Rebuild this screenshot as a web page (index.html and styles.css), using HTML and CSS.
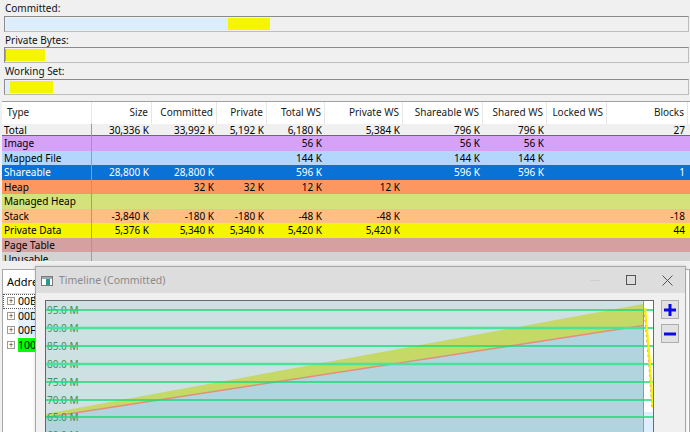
FILE: index.html
```html
<!DOCTYPE html>
<html lang="en">

<head>
    <link rel="stylesheet" href="styles.css">
    <title>VMMap</title>
</head>

<body>
    <div class="gauges">
        <div class="gauge">
            <p class="label">Committed:</p>
            <div class="bar">
                <span class="fill light" style="width: 222px"></span>
                <span class="fill yellow" style="width: 42px"></span>
            </div>
        </div>
        <div class="gauge">
            <p class="label">Private Bytes:</p>
            <div class="bar flush">
                <span class="fill yellow edge" style="width: 40px"></span>
            </div>
        </div>
        <div class="gauge">
            <p class="label">Working Set:</p>
            <div class="bar">
                <span class="fill light" style="width: 4px"></span>
                <span class="fill yellow" style="width: 43px"></span>
            </div>
        </div>
    </div>

    <div class="table">
        <div class="row head">
            <div>Type</div>
            <div>Size</div>
            <div>Committed</div>
            <div>Private</div>
            <div>Total WS</div>
            <div>Private WS</div>
            <div>Shareable WS</div>
            <div>Shared WS</div>
            <div>Locked WS</div>
            <div>Blocks</div>
        </div>
        <div class="row total">
            <div>Total</div>
            <div>30,336 K</div>
            <div>33,992 K</div>
            <div>5,192 K</div>
            <div>6,180 K</div>
            <div>5,384 K</div>
            <div>796 K</div>
            <div>796 K</div>
            <div></div>
            <div>27</div>
        </div>
        <div class="row image">
            <div>Image</div>
            <div></div>
            <div></div>
            <div></div>
            <div>56 K</div>
            <div></div>
            <div>56 K</div>
            <div>56 K</div>
            <div></div>
            <div></div>
        </div>
        <div class="row mapped">
            <div>Mapped File</div>
            <div></div>
            <div></div>
            <div></div>
            <div>144 K</div>
            <div></div>
            <div>144 K</div>
            <div>144 K</div>
            <div></div>
            <div></div>
        </div>
        <div class="row shareable">
            <div>Shareable</div>
            <div>28,800 K</div>
            <div>28,800 K</div>
            <div></div>
            <div>596 K</div>
            <div></div>
            <div>596 K</div>
            <div>596 K</div>
            <div></div>
            <div>1</div>
        </div>
        <div class="row heap">
            <div>Heap</div>
            <div></div>
            <div>32 K</div>
            <div>32 K</div>
            <div>12 K</div>
            <div>12 K</div>
            <div></div>
            <div></div>
            <div></div>
            <div></div>
        </div>
        <div class="row managed">
            <div>Managed Heap</div>
            <div></div>
            <div></div>
            <div></div>
            <div></div>
            <div></div>
            <div></div>
            <div></div>
            <div></div>
            <div></div>
        </div>
        <div class="row stack">
            <div>Stack</div>
            <div>-3,840 K</div>
            <div>-180 K</div>
            <div>-180 K</div>
            <div>-48 K</div>
            <div>-48 K</div>
            <div></div>
            <div></div>
            <div></div>
            <div>-18</div>
        </div>
        <div class="row private">
            <div>Private Data</div>
            <div>5,376 K</div>
            <div>5,340 K</div>
            <div>5,340 K</div>
            <div>5,420 K</div>
            <div>5,420 K</div>
            <div></div>
            <div></div>
            <div></div>
            <div>44</div>
        </div>
        <div class="row pagetable">
            <div>Page Table</div>
            <div></div>
            <div></div>
            <div></div>
            <div></div>
            <div></div>
            <div></div>
            <div></div>
            <div></div>
            <div></div>
        </div>
        <div class="row unusable">
            <div>Unusable</div>
            <div></div>
            <div></div>
            <div></div>
            <div></div>
            <div></div>
            <div></div>
            <div></div>
            <div></div>
            <div></div>
        </div>
    </div>

    <div class="lower">
        <div class="tree">
            <div class="tree-head">Address</div>
            <div class="node focus"><span class="exp">+</span><span class="addr">00BA0000</span></div>
            <div class="node"><span class="exp">+</span><span class="addr soft">00D00000</span></div>
            <div class="node"><span class="exp">+</span><span class="addr soft">00F30000</span></div>
            <div class="node"><span class="exp">+</span><span class="addr green">10000000</span></div>
        </div>

        <!-- floating timeline window -->
        <div class="timeline">
            <div class="titlebar">
                <svg class="app-icon" width="12" height="10" viewBox="0 0 12 10">
                    <rect x="0.5" y="0.5" width="11" height="9" fill="#fff" stroke="#7a7a7a" />
                    <rect x="1" y="1" width="10" height="2" fill="#9ab" />
                    <rect x="5" y="3" width="4" height="6" fill="#2a9a8a" />
                </svg>
                <span class="title">Timeline (Committed)</span>
                <div class="controls">
                    <span class="ctl">
                        <svg width="10" height="10" viewBox="0 0 10 10"><path d="M0 5.5h10" stroke="#cfcfcf" /></svg>
                    </span>
                    <span class="ctl">
                        <svg width="10" height="10" viewBox="0 0 10 10"><rect x="0.5" y="0.5" width="9" height="9" fill="none" stroke="#555" /></svg>
                    </span>
                    <span class="ctl">
                        <svg width="11" height="11" viewBox="0 0 11 11"><path d="M0.5 0.5l10 10M10.5 0.5l-10 10" stroke="#555" /></svg>
                    </span>
                </div>
            </div>
            <div class="tl-body">
                <div class="chart">
                    <svg width="609" height="140" viewBox="0 0 609 140">
                        <rect x="0" y="0" width="609" height="140" fill="#cde0e2" />
                        <polygon points="0,117 598,25 598,140 0,140" fill="#b1d4df" />
                        <polygon points="0,114 598,4 598,25 0,117" fill="#c6d866" />
                        <line x1="0" y1="117.5" x2="598" y2="25.5" stroke="#e08f78" stroke-width="1.5" />
                        <g class="axis">
                            <text x="2" y="14">95.0 M</text>
                            <text x="2" y="32">90.0 M</text>
                            <text x="2" y="50">85.0 M</text>
                            <text x="2" y="68">80.0 M</text>
                            <text x="2" y="86">75.0 M</text>
                            <text x="2" y="104">70.0 M</text>
                            <text x="2" y="121">65.0 M</text>
                            <text x="2" y="139">60.0 M</text>
                        </g>
                        <g stroke="#18dc78" stroke-width="1.5">
                            <line x1="0" y1="10" x2="609" y2="10" />
                            <line x1="0" y1="28" x2="609" y2="28" stroke="#4ae39a" stroke-width="2.5" />
                            <line x1="0" y1="46" x2="609" y2="46" />
                            <line x1="0" y1="64" x2="609" y2="64" stroke="#4ae39a" stroke-width="2.5" />
                            <line x1="0" y1="82" x2="609" y2="82" />
                            <line x1="0" y1="100" x2="609" y2="100" />
                            <line x1="0" y1="117" x2="609" y2="117" />
                            <line x1="0" y1="135" x2="609" y2="135" />
                        </g>
                        <rect x="599" y="1" width="9" height="139" fill="#ffffff" />
                        <rect x="599" y="112" width="9" height="28" fill="#ddeeff" />
                        <g stroke="#18dc78" stroke-width="1.5">
                            <line x1="599" y1="10" x2="609" y2="10" />
                            <line x1="599" y1="28" x2="609" y2="28" />
                            <line x1="599" y1="46" x2="609" y2="46" />
                            <line x1="599" y1="64" x2="609" y2="64" />
                            <line x1="599" y1="82" x2="609" y2="82" />
                            <line x1="599" y1="100" x2="609" y2="100" />
                            <line x1="599" y1="117" x2="609" y2="117" />
                        </g>
                        <line x1="598.5" y1="0" x2="598.5" y2="140" stroke="#30e040" />
                        <polyline points="600,8 601,20 603,42 605,66 606,80 607,96 608,108" fill="none" stroke="#f4f400" stroke-width="2.5" />
                        <polyline points="599,10 600,22 602,44 604,68 605,82 606,98 607,110" fill="none" stroke="#ef9a9a" stroke-width="1" stroke-dasharray="2 3" />
                        <line x1="0" y1="0.5" x2="609" y2="0.5" stroke="#6a6a6a" />
                        <line x1="0.5" y1="0" x2="0.5" y2="140" stroke="#a0503e" />
                        <line x1="608.5" y1="0" x2="608.5" y2="140" stroke="#6a6a6a" />
                    </svg>
                </div>
                <div class="zoom">
                    <button class="zbtn">
                        <svg width="12" height="12" viewBox="0 0 12 12"><path d="M0 6h12M6 0v12" stroke="#0a0ae6" stroke-width="3" /></svg>
                    </button>
                    <button class="zbtn">
                        <svg width="12" height="12" viewBox="0 0 12 12"><path d="M0 6h12" stroke="#0a0ae6" stroke-width="3" /></svg>
                    </button>
                </div>
            </div>
        </div>
    </div>
</body>

</html>
```

FILE: styles.css
```css
* {
    margin: 0;
    padding: 0;
    box-sizing: border-box;
    font-family: "Noto Sans", "DejaVu Sans", sans-serif;
}

body {
    background-color: #f0f0f0;
    width: 690px;
    height: 432px;
    overflow: hidden;
    font-size: 10px;
    color: #000;
}

/* gauges on top */

.gauges {
    height: 101px;
    padding: 0 1px 0 4px;
}

.label {
    height: 15.5px;
    line-height: 16px;
    padding-left: 1px;
    color: #111;
}

.bar {
    height: 16px;
    display: flex;
    padding: 1px 1px;
    border: 1px solid #8a8a8a;
    border-bottom-color: #bdbdbd;
    border-right-color: #bdbdbd;
    background-color: #f0f0f0;
}

.bar.flush {
    padding-left: 0;
}

.fill {
    height: 100%;
}

.fill.light {
    background-color: #dcedfd;
}

.fill.yellow {
    background-color: #f5f500;
}

.fill.edge {
    border-left: 1px solid #b8b800;
}

/* summary table */

.table {
    margin-left: 2px;
    width: 688px;
    height: 160px;
    overflow: hidden;
    border-top: 1px solid #a0a0a0;
    background-color: #fff;
}

.row {
    display: grid;
    grid-template-columns: 90px 60px 65px 50px 58px 78px 80px 64px 60px 81px;
    height: 14.5px;
    line-height: 14.5px;
}

.row div {
    text-align: right;
    padding-right: 3px;
    white-space: nowrap;
    overflow: hidden;
}

.row div:first-child {
    text-align: left;
    padding-left: 2px;
    border-right: 1px solid #9c9c9c;
}

.row.head {
    height: 22px;
    line-height: 21px;
    background-color: #fff;
    color: #1a1a1a;
}

.row.head div {
    border-right: 1px solid #e6e6e6;
}

.row.head div:first-child {
    padding-left: 5px;
    border-right: 1px solid #e6e6e6;
}

.row.total {
    height: 12px;
    line-height: 12px;
    background-color: #f0f0f0;
    border-bottom: 1px solid #6a6a6a;
}

.row.total div {
    overflow: visible;
}

.image {
    background-color: #d6a2f8;
}

.mapped {
    background-color: #b2d6fc;
}

.shareable {
    background-color: #0a72d6;
    color: #fff;
}

.heap {
    background-color: #fd9762;
}

.managed {
    background-color: #d5e27b;
}

.stack {
    background-color: #ffbe82;
}

.private {
    background-color: #f5f500;
}

.pagetable {
    background-color: #d4a0a0;
}

.unusable {
    background-color: #d3d3d3;
}

/* lower pane */

.lower {
    position: relative;
    height: 171px;
    padding-top: 8px;
}

.tree {
    margin-left: 2px;
    width: 688px;
    height: 170px;
    background-color: #fff;
    border: 1px solid #a8a8a8;
}

.tree-head {
    width: 32px;
    overflow: hidden;
    white-space: nowrap;
    height: 24px;
    line-height: 24px;
    padding-left: 4px;
    font-size: 11px;
    border-bottom: 1px solid #e3e3e3;
}

.node {
    display: flex;
    align-items: center;
    width: 32px;
    overflow: hidden;
    white-space: nowrap;
    height: 14.5px;
    padding-left: 4px;
    font-size: 10.5px;
}

.node.focus {
    outline: 1px dotted #555;
    outline-offset: -1px;
}

.exp {
    flex: none;
    width: 8px;
    height: 8px;
    border: 1px solid #9a9a9a;
    font-size: 8px;
    line-height: 6px;
    text-align: center;
    color: #333;
    margin-right: 3px;
}

.addr {
    flex: none;
}

.soft {
    background-color: #e3f0fc;
}

.green {
    background-color: #00ff00;
}

/* timeline window */

.timeline {
    position: absolute;
    left: 35px;
    top: 5px;
    width: 651px;
    height: 180px;
    background-color: #f0f0f0;
    border: 1px solid #a8a8a8;
    box-shadow: 0 0 3px rgba(0, 0, 0, 0.15);
}

.titlebar {
    height: 26px;
    display: flex;
    align-items: center;
    padding-left: 5px;
    background-color: #dddddd;
}

.app-icon {
    margin-top: 1px;
}

.title {
    margin-left: 6px;
    color: #8a8a8a;
    font-size: 10.5px;
}

.controls {
    margin-left: auto;
    display: flex;
}

.ctl {
    width: 36px;
    height: 26px;
    display: flex;
    align-items: center;
    justify-content: center;
}

.tl-body {
    display: flex;
    gap: 7px;
    padding: 7px 0 0 9px;
}

.chart {
    width: 609px;
    height: 140px;
}

.chart svg {
    display: block;
}

.axis text {
    font-size: 10px;
    fill: #3f8f5e;
}

.zoom {
    display: flex;
    flex-direction: column;
    gap: 5px;
}

.zbtn {
    width: 18px;
    height: 19px;
    border: 1px solid #adadad;
    background-color: #e1e1e1;
    display: flex;
    align-items: center;
    justify-content: center;
}
```
